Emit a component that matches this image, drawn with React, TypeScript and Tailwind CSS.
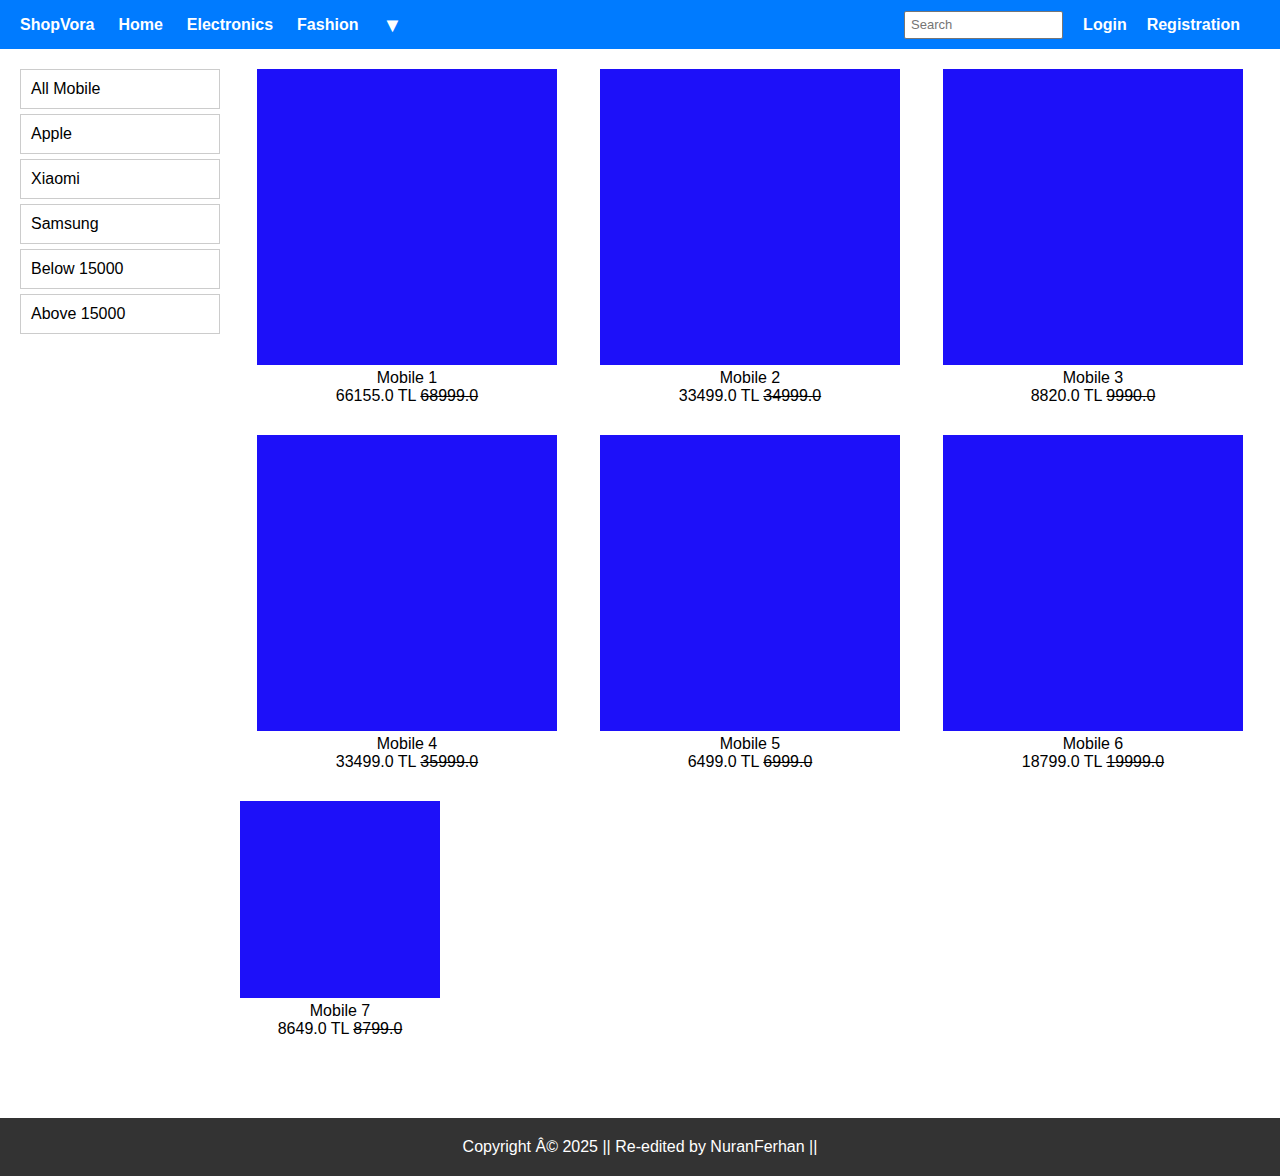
import React from "react";

const products = [
  { name: "Mobile 1", price: "66155.0", old: "68999.0" },
  { name: "Mobile 2", price: "33499.0", old: "34999.0" },
  { name: "Mobile 3", price: "8820.0", old: "9990.0" },
  { name: "Mobile 4", price: "33499.0", old: "35999.0" },
  { name: "Mobile 5", price: "6499.0", old: "6999.0" },
  { name: "Mobile 6", price: "18799.0", old: "19999.0" },
];

const filters = ["All Mobile", "Apple", "Xiaomi", "Samsung", "Below 15000", "Above 15000"];

function Card({ name, price, old, big }: { name: string; price: string; old: string; big: boolean }) {
  return (
    <div className={big ? "w-[300px] text-center" : "w-[200px] text-center"}>
      <div className={big ? "h-[296px] w-[300px] bg-[#1d10f9]" : "h-[197px] w-[200px] bg-[#1d10f9]"} />
      <div className="pt-[4px] leading-[18px]">
        <div>{name}</div>
        <div>
          {price} TL <span className="line-through">{old}</span>
        </div>
      </div>
    </div>
  );
}

export default function App() {
  return (
    <div className="min-h-[1176px] flex flex-col bg-white text-black text-[16px]" style={{ fontFamily: '"Liberation Sans", Arial, sans-serif' }}>
      <nav className="h-[49px] bg-[#007bff] flex items-center pl-5 pr-10 text-white font-bold">
        <div className="flex items-center gap-[24px]">
          <span>ShopVora</span>
          <span>Home</span>
          <span>Electronics</span>
          <span>Fashion</span>
          <span className="text-[20px] leading-none">▼</span>
        </div>
        <div className="ml-auto flex items-center gap-5">
          <input
            placeholder="Search"
            className="w-[159px] h-[28px] border border-[#767676] rounded-[2px] bg-white px-[6px] text-[13px] font-normal text-black placeholder:text-[#757575] outline-none"
          />
          <span>Login</span>
          <span>Registration</span>
        </div>
      </nav>
      <div className="flex flex-1 pt-5 px-5">
        <div className="w-[200px] flex flex-col gap-[5px]">
          {filters.map((f) => (
            <div key={f} className="h-[40px] border border-[#cccccc] px-[10px] flex items-center">
              {f}
            </div>
          ))}
        </div>
        <div className="ml-5 flex-1">
          <div className="ml-[17px] flex flex-wrap gap-x-[43px] gap-y-[30px]">
            {products.map((p) => (
              <Card key={p.name} {...p} big />
            ))}
          </div>
          <div className="mt-[30px]">
            <Card name="Mobile 7" price="8649.0" old="8799.0" big={false} />
          </div>
        </div>
      </div>
      <footer className="h-[58px] bg-[#333333] text-white flex items-center justify-center">
        Copyright Â© 2025 || Re-edited by NuranFerhan ||
      </footer>
    </div>
  );
}
